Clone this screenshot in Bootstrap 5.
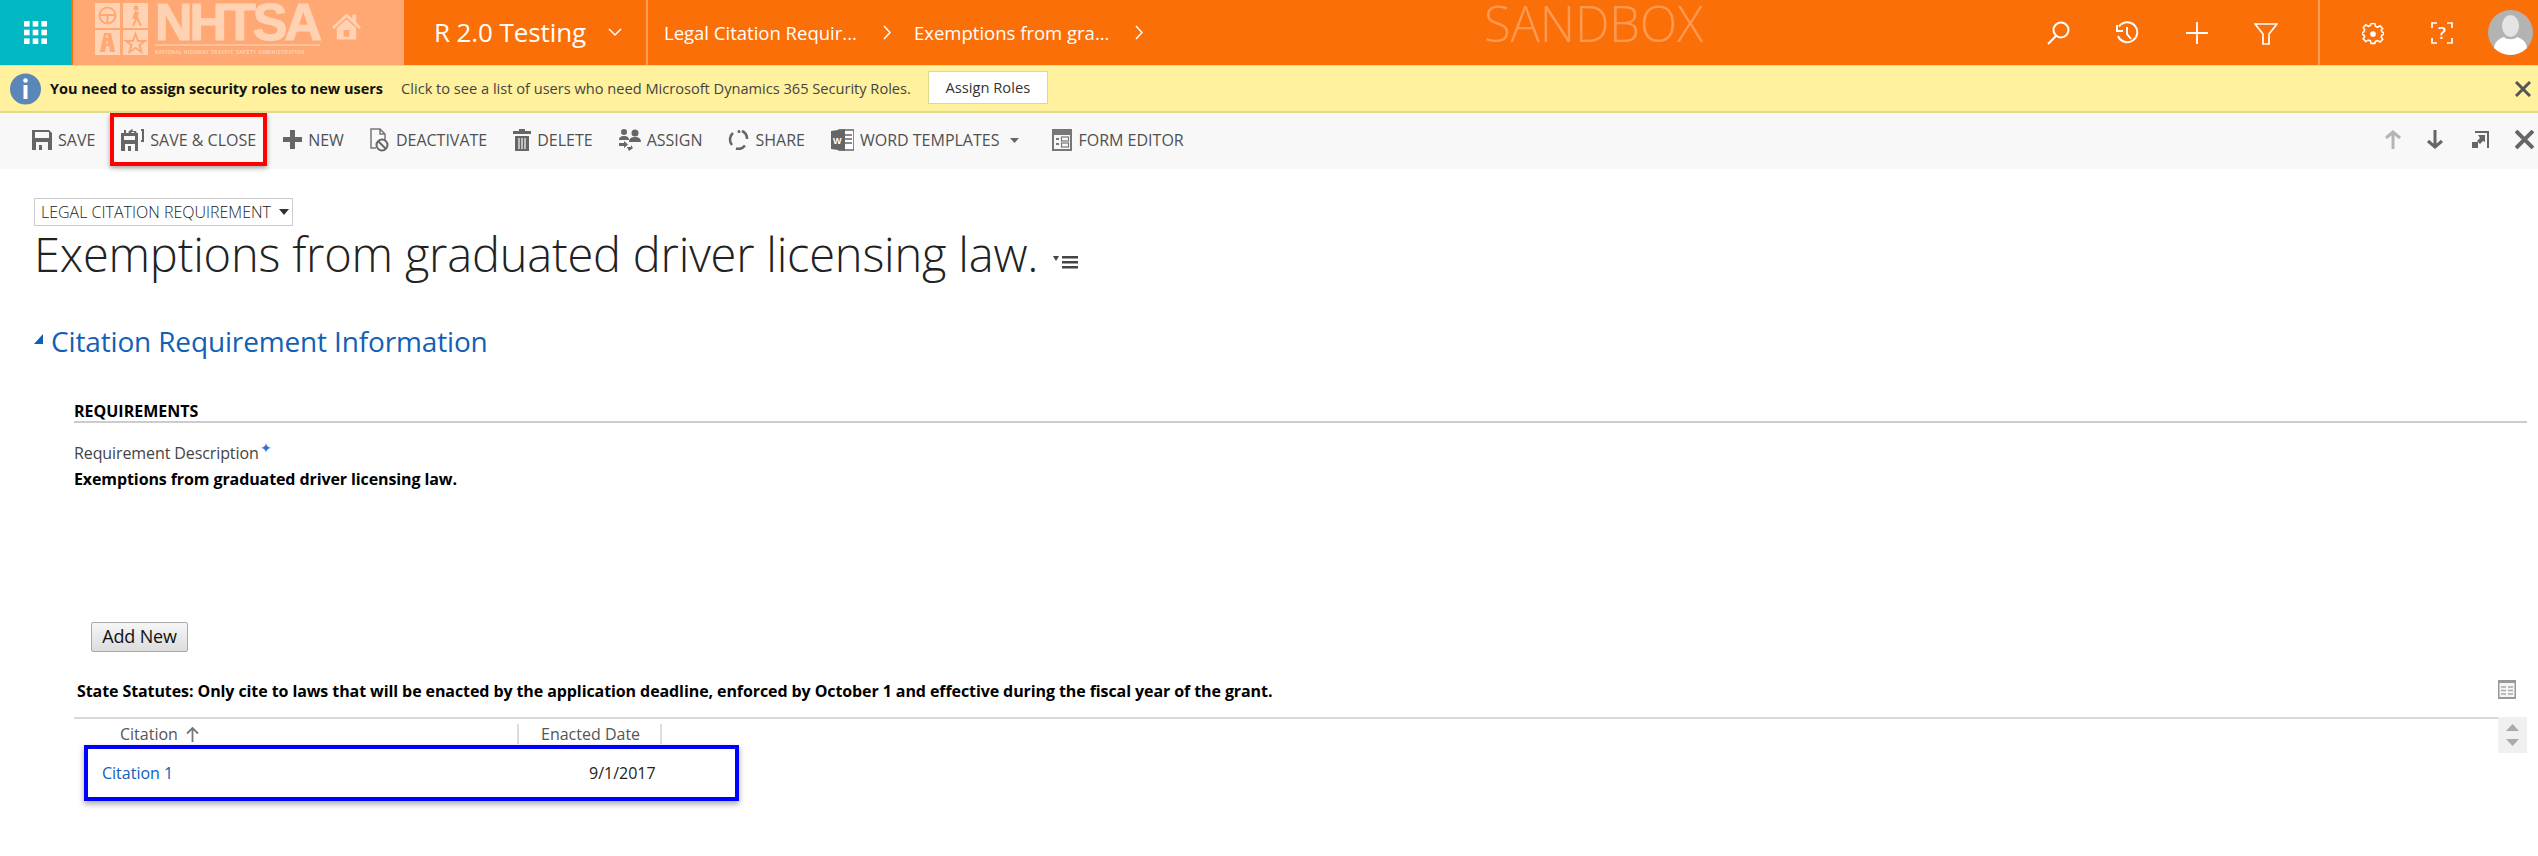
<!DOCTYPE html>
<html lang="en"><head><meta charset="utf-8"><title>Exemptions</title>
<link href="https://cdn.jsdelivr.net/npm/bootstrap@5.3.0/dist/css/bootstrap.min.css" rel="stylesheet">
<style>
html,body{height:856px;overflow:hidden}
body{font-family:"Open Sans","Noto Sans",sans-serif;background:#fff;color:#000}
.topbar{height:65px;background:#fb6f09;color:#fff}
.waffle{width:71px;background:#00b7c3}
.logo-zone{width:333px;background:#ffa873;border-left:2px solid #fb6f09;color:#ffd2b3;padding-left:22px}
.logo-word{font:700 52px/42px "Liberation Sans",sans-serif;letter-spacing:-3px;-webkit-text-stroke:1.2px #ffd2b3;margin-top:1px;height:45px;border-bottom:2px solid #ffc49f;width:165px}
.logo-sub{font:700 4.6px/6px "Liberation Sans",sans-serif;letter-spacing:.5px;white-space:nowrap;margin-top:4px}
.logo-tiles{margin:3px 7px 0 0}
.logo-house{margin:13px 0 0 12px}
.env-name{width:244px;padding-left:30px;font-size:26px;letter-spacing:-.1px;border-right:2px solid #ff9d55}
.crumb{font-size:18.5px;white-space:nowrap;padding-left:16px}
.crumb-a{width:219px}
.crumb-b{width:221px;margin-left:22px}
.sandbox{font-size:49px;font-weight:300;color:#fd9a52;letter-spacing:-.2px;line-height:46px;left:1484px;top:0}
.top-icon{width:69.5px}
.divider{width:2px;height:65px;background:#ff9d55;margin-left:13px}
.gear-cell{margin-left:42px;width:69px}
.help-cell{width:22px;height:22px;font-size:17px;font-weight:600;line-height:22px}
.avatar{width:45px;height:45px;border-radius:50%;background:#b3b3b3;overflow:hidden;margin:0 5px 0 35px}
.notice{height:48px;background:#fff19d;border-bottom:2px solid #dddb8e;border-top:1px solid #e8e08a;padding-left:10px;color:#333}
.notice b{font-weight:700;color:#111;font-size:14.5px;margin-left:9px;white-space:nowrap}
.notice-text{margin-left:18px;font-size:14.6px;white-space:nowrap;color:#444}
.assign-btn{width:120px;height:33px;background:#fff;border:1px solid #dddb8e;margin-left:17px;font-size:14.7px;color:#333;text-align:center;line-height:30px;margin-top:-2px}
.notice-x{margin-right:7px}
.cmdbar{height:56px;background:#f8f8f8;padding-left:19px;color:#505050}
.cmd{padding:0 13px;height:53px;font-size:16px;white-space:nowrap;gap:6px}
.cmd-red{border:4px solid #f00;padding:0 7px;margin:0 3px 0 2px;box-shadow:0 2px 5px rgba(0,0,0,.35)}
.cmd-tight{padding-right:0}
.cmd-caret{margin:25px 33px 0 11px}
.cmd-right{height:53px;margin-right:4px}
.ar-up{margin-right:26px}
.ar-down{margin-right:29px}
.ar-exp{margin-right:26px}
.form-zone{padding:29px 11px 0 34px}
.type-pick{width:259px;height:28px;border:1px solid #ccc;font-size:16px;font-weight:300;color:#222;padding-left:6px;line-height:26px;white-space:nowrap}
.page-title{font-size:47px;font-weight:300;line-height:80px;letter-spacing:-.2px;color:#222;margin:-12px 0 0;white-space:nowrap;height:87px}
.title-menu{margin:41px 0 0 15px}
.sect-title{font-size:28px;line-height:36px;color:#1160b7;letter-spacing:-.15px;margin:22px 0 0;font-weight:400}
.sect-tri{width:0;height:0;border-style:solid;border-width:0 0 10px 9px;border-color:transparent transparent #1160b7 transparent;margin-right:8px;margin-top:-4px}
.reqs{margin:42px 0 0 40px}
.reqs-head{font-size:16px;font-weight:700;line-height:20px;border-bottom:2px solid #ccc;color:#000}
.field-label{font-size:16px;letter-spacing:-.1px;color:#444;line-height:20px;margin-top:18px}
.field-star{color:#3b6fc4;font-size:14px;line-height:1;vertical-align:6px;margin-left:1px}
.field-val{font-size:16px;font-weight:700;letter-spacing:-.1px;line-height:20px;margin-top:6px;color:#000}
.add-new{width:97px;height:30px;margin:133px 0 0 91px;background:linear-gradient(#f6f6f6,#dcdcdc);border:1px solid #a9a9a9;border-radius:2px;font-size:18px;line-height:27px;color:#111;text-align:center;letter-spacing:-.2px}
.grid-cap{margin:29px 0 0 77px;font-size:16px;font-weight:700;letter-spacing:-.09px;line-height:20px;height:36px;white-space:nowrap;color:#000}
.grid-icon{margin:-1px 22px 0 0}
.grid-wrap{margin-left:74px}
.grid-rule{border-top:2px solid #d8d8d8;margin-right:40px;height:36px;padding-top:5px;color:#555;font-size:16px}
.col-cit{width:445px;padding-left:46px;height:20px;border-right:2px solid #ddd;line-height:24px}
.col-date{width:143px;padding-left:22px;height:20px;border-right:2px solid #ddd;line-height:24px;white-space:nowrap}
.scroll-box{width:29px;height:36px;background:#f0f0f0;right:11px;top:0}
.row-box{margin-left:10px;width:655px;height:56px;border:4px solid #00f;box-shadow:0 3px 6px rgba(0,0,0,.35);font-size:16px;color:#222;margin-top:-8px;position:relative}
.cit-link{color:#1160b7;margin-left:14px;width:487px;text-decoration:none}
</style></head><body>

<div class="topbar d-flex position-relative">
  <div class="waffle d-flex align-items-center justify-content-center">
    <svg width="23" height="23" viewBox="0 0 23 23" fill="#fff"><rect width="5.6" height="5.6"/><rect x="8.7" width="5.6" height="5.6"/><rect x="17.4" width="5.6" height="5.6"/><rect y="8.7" width="5.6" height="5.6"/><rect x="8.7" y="8.7" width="5.6" height="5.6"/><rect x="17.4" y="8.7" width="5.6" height="5.6"/><rect y="17.4" width="5.6" height="5.6"/><rect x="8.7" y="17.4" width="5.6" height="5.6"/><rect x="17.4" y="17.4" width="5.6" height="5.6"/></svg>
  </div>
  <div class="logo-zone d-flex">
    <svg width="53" height="52" viewBox="0 0 53 52" class="logo-tiles flex-shrink-0" fill="#ffd2b3">
      <rect width="25" height="25"/><rect x="28" width="25" height="25"/><rect y="27" width="25" height="25"/><rect x="28" y="27" width="25" height="25"/>
      <circle cx="12.5" cy="12.5" r="8" fill="none" stroke="#ffa873" stroke-width="2"/><path d="M5 12h15M12.500 13v7" stroke="#ffa873" stroke-width="2"/>
      <circle cx="41" cy="5" r="2.500" fill="#ffa873"/><path d="M40 8l-3 7 3 1-3 7h2l3-6 3 6h2l-4-9 1-5z" fill="#ffa873"/>
      <path d="M9 30h7l4 19h-5l-1-6h-3l-1 6H5z" fill="#ffa873"/><path d="M12 32v3M12 38v3" stroke="#ffd2b3" stroke-width="1.500"/>
      <path d="M40.500 31l2.500 7h7l-5.500 4 2 7-6-4-6 4 2-7-5.500-4h7z" fill="none" stroke="#ffa873" stroke-width="2"/>
    </svg>
    <div class="flex-shrink-0">
      <div class="logo-word">NHTSA</div>
      <div class="logo-sub">NATIONAL HIGHWAY TRAFFIC SAFETY ADMINISTRATION</div>
    </div>
    <svg width="29" height="27" viewBox="0 0 30 27" class="logo-house flex-shrink-0" fill="#ffd2b3"><path d="M15 0l6 5V1h4v8l5 5-2 2-13-12L2 16l-2-2z"/><path fill-rule="evenodd" d="M5 15L15 6l10 9v12H5zM12 17v7h6v-7z"/></svg>
  </div>
  <div class="env-name d-flex align-items-center justify-content-between flex-shrink-0 pe-3">
    <span>R 2.0 Testing</span>
    <svg width="14" height="9" viewBox="0 0 14 9" fill="none" stroke="#fff" stroke-width="1.500" class="me-2"><path d="M1 1l6 6 6-6"/></svg>
  </div>
  <div class="d-flex align-items-center crumb">
    <span class="crumb-a">Legal Citation Requir...</span>
    <svg width="9" height="15" viewBox="0 0 9 15" fill="none" stroke="#fff" stroke-width="1.500"><path d="M1 1l6 6.500-6 6.500"/></svg>
    <span class="crumb-b">Exemptions from gra...</span>
    <svg width="9" height="15" viewBox="0 0 9 15" fill="none" stroke="#fff" stroke-width="1.500"><path d="M1 1l6 6.500-6 6.500"/></svg>
  </div>
  <div class="sandbox position-absolute">SANDBOX</div>
  <div class="ms-auto d-flex align-items-center">
    <div class="top-icon text-center"><svg width="24" height="24" viewBox="0 0 24 24" fill="none" stroke="#fff" stroke-width="2"><circle cx="15" cy="9" r="7.500"/><path d="M10 15L2 23"/></svg></div>
    <div class="top-icon text-center"><svg width="24" height="24" viewBox="0 0 24 24" fill="none" stroke="#fff" stroke-width="2"><path d="M4 5.500A10 10 0 1 1 3 15"/><path d="M2 4v6h6"/><path d="M12 6v7l4 5"/></svg></div>
    <div class="top-icon text-center"><svg width="24" height="24" viewBox="0 0 24 24" fill="none" stroke="#fff" stroke-width="1.800"><path d="M12 1v22M1 12h22"/></svg></div>
    <div class="top-icon text-center me-1"><svg width="24" height="22" viewBox="0 0 24 22" fill="none" stroke="#fff" stroke-width="1.700"><path d="M1 1h22l-8 10v10H9V11z"/></svg></div>
    <div class="divider"></div>
    <div class="gear-cell"><svg width="22" height="22" viewBox="0 0 22 22" fill="none" stroke="#fff" stroke-width="1.700"><path d="M9 1h4l.6 3 2.200 1 2.700-1.500 2.700 2.800L19.700 8l.9 2 2.400 1v1l-2.400 1.200-.9 2 1.500 2.500-2.700 2.800-2.700-1.500-2.200.9L13 22H9l-.6-2.600-2.200-.9L3.500 20 .8 17.200 2.300 14.700l-.9-1.500L-1 12v-1l2.400-1 .9-2L.8 5.300 3.500 2.500 6.200 4l2.200-1z" transform="translate(.5 -.5) scale(.95)"/><circle cx="11" cy="11" r="2" fill="#fff"/></svg></div>
    <div class="help-cell d-flex align-items-center justify-content-center position-relative">?
      <svg class="position-absolute top-0 start-0" width="22" height="22" viewBox="0 0 22 22" fill="none" stroke="#fff" stroke-width="1.700"><path d="M1 6V1h5M16 1h5v5M21 16v5h-5M6 21H1v-5"/></svg>
    </div>
    <div class="avatar flex-shrink-0"><svg width="45" height="45" viewBox="0 0 45 45"><ellipse cx="22.500" cy="16" rx="8.500" ry="11" fill="#e4e4e4"/><path d="M6 45c-1-10 1-15 10-18 2 3 11 3 13 0 9 3 11 8 10 18z" fill="#fff"/></svg></div>
  </div>
</div>

<div class="notice d-flex align-items-center position-relative">
  <svg width="31" height="32" viewBox="0 0 31 32" class="flex-shrink-0"><circle cx="15.500" cy="16" r="15.500" fill="#5a87b8"/><circle cx="15.500" cy="7.500" r="2.300" fill="#fff"/><rect x="13.500" y="12" width="4" height="14" fill="#fff"/></svg>
  <b>You need to assign security roles to new users</b>
  <span class="notice-text">Click to see a list of users who need Microsoft Dynamics 365 Security Roles.</span>
  <div class="assign-btn">Assign Roles</div>
  <svg width="16" height="16" viewBox="0 0 16 16" class="ms-auto notice-x" stroke="#555" stroke-width="3"><path d="M1 1l14 14M15 1L1 15"/></svg>
</div>

<div class="cmdbar d-flex align-items-start">
  <div class="cmd d-flex align-items-center"><svg width="20" height="20" viewBox="0 0 20 20" fill="#666"><path fill-rule="evenodd" d="M0 0h17l3 3v17H0zM3 2v6h14V2zM4 12v8h3v-5h3v5h6v-8z"/></svg>SAVE</div>
  <div class="cmd cmd-red d-flex align-items-center"><svg width="23" height="22" viewBox="0 0 23 22" fill="#666"><path fill-rule="evenodd" d="M0 4h3V1h2v3h12v18H0zM3 7v4h11V7zM4 15v7h3v-5h3v5h4v-7z"/><path d="M7 3l4-3 1 1-1 1h4l1 3h-2l-1-2h-3l1 1-1 1zM20 0h3v13h-3v-2h1V2h-1z"/></svg>SAVE &amp; CLOSE</div>
  <div class="cmd d-flex align-items-center"><svg width="19" height="19" viewBox="0 0 19 19" fill="#666"><path d="M7 0h5v7h7v5h-7v7H7v-7H0V7h7z"/></svg>NEW</div>
  <div class="cmd d-flex align-items-center"><svg width="20" height="24" viewBox="0 0 20 24" fill="none" stroke="#777" stroke-width="1.500"><path d="M6 20H1V1h9l5 5v6M10 1v5h5"/><circle cx="12" cy="17" r="5.500" stroke="#666" stroke-width="2"/><path d="M8 13l8 8" stroke="#666" stroke-width="2"/></svg>DEACTIVATE</div>
  <div class="cmd d-flex align-items-center"><svg width="18" height="22" viewBox="0 0 18 22" fill="#666"><path d="M6 0h6v2h6v3H0V2h6zM2 7h14v15H2z"/><path d="M6 9v11M9 9v11M12 9v11" stroke="#f8f8f8" stroke-width="1.200"/></svg>DELETE</div>
  <div class="cmd d-flex align-items-center"><svg width="22" height="22" viewBox="0 0 22 22" fill="#666"><circle cx="5" cy="3" r="3"/><circle cx="16" cy="4" r="3.500"/><path d="M0 11c0-3 2-4 5-4s5 1 5 4zM10 13c0-4 3-5 6-5s6 1 6 5zM0 14h5v-2l4 3.500L5 19v-2H0zM8 18h4v-2l2 3-4 3z"/></svg>ASSIGN</div>
  <div class="cmd d-flex align-items-center"><svg width="21" height="21" viewBox="0 0 21 21" fill="none" stroke="#666" stroke-width="2.500"><path d="M5 4A8.500 8.500 0 0 0 4 16M8 19.500a8.500 8.500 0 0 0 9-3M14 2a8.500 8.500 0 0 1 5 8"/><circle cx="11" cy="2.500" r="1.500" fill="#666" stroke="none"/></svg>SHARE</div>
  <div class="cmd cmd-tight d-flex align-items-center"><svg width="23" height="22" viewBox="0 0 23 22"><rect x="8" y="1" width="15" height="20" fill="#fff" stroke="#666" stroke-width="1.500"/><path d="M14 6h7M14 10h7M14 14h7" stroke="#666" stroke-width="1.500"/><path d="M0 2l14-2v22L0 20z" fill="#666"/><text x="2" y="15" font-size="9" font-weight="700" fill="#fff" font-family="Liberation Sans,sans-serif">W</text></svg>WORD TEMPLATES</div>
  <svg width="9" height="5" viewBox="0 0 9 5" fill="#666" class="cmd-caret"><path d="M0 0h9L4.500 5z"/></svg>
  <div class="cmd ps-0 d-flex align-items-center"><svg width="20" height="22" viewBox="0 0 20 22"><rect width="20" height="22" fill="#777"/><rect x="2" y="6" width="16" height="14" fill="#f8f8f8"/><path d="M4 10h3M4 15h3" stroke="#777" stroke-width="2"/><rect x="9.500" y="8" width="7" height="4" fill="none" stroke="#777" stroke-width="1.200"/><rect x="9.500" y="14" width="7" height="4" fill="none" stroke="#777" stroke-width="1.200"/></svg>FORM EDITOR</div>
  <div class="ms-auto d-flex align-items-center cmd-right">
    <svg width="16" height="19" viewBox="0 0 16 19" fill="none" stroke="#b5b5b5" stroke-width="3" class="ar-up"><path d="M8 19V2M1 8l7-6 7 6"/></svg>
    <svg width="16" height="19" viewBox="0 0 16 19" fill="none" stroke="#666" stroke-width="3" class="ar-down"><path d="M8 0v17M1 11l7 6 7-6"/></svg>
    <svg width="17" height="17" viewBox="0 0 17 17" fill="#666" class="ar-exp"><path d="M3 0h14v17h-2V2H3z"/><rect y="11" width="6" height="6"/><path d="M6 4h7v7l-2-1-3 3-3-3 3-3z"/></svg>
    <svg width="19" height="19" viewBox="0 0 19 19" stroke="#666" stroke-width="4"><path d="M1 1l17 17M18 1L1 18"/></svg>
  </div>
</div>

<div class="form-zone">
  <div class="type-pick d-flex align-items-center">LEGAL CITATION REQUIREMENT
    <svg width="10" height="6" viewBox="0 0 10 6" fill="#333" class="ms-2"><path d="M0 0h10L5 6z"/></svg></div>
  <h1 class="page-title d-flex align-items-start"><span>Exemptions from graduated driver licensing law.</span>
    <svg width="25" height="15" viewBox="0 0 25 15" fill="#444" class="title-menu"><path d="M0 1h6L3 6zM9 1h16v2.500H9zM9 6h16v2.500H9zM9 11h16v2.500H9z"/></svg></h1>
  <h2 class="sect-title d-flex align-items-center"><span class="sect-tri"></span>Citation Requirement Information</h2>
  <div class="reqs">
    <div class="reqs-head">REQUIREMENTS</div>
    <div class="field-label">Requirement Description<span class="field-star">✦</span></div>
    <div class="field-val">Exemptions from graduated driver licensing law.</div>
  </div>
</div>
<div class="add-new">Add New</div>
<div class="grid-cap d-flex justify-content-between">State Statutes: Only cite to laws that will be enacted by the application deadline, enforced by October 1 and effective during the fiscal year of the grant.
  <svg width="18" height="19" viewBox="0 0 18 19" class="grid-icon"><rect width="18" height="19" fill="#999"/><rect x="1.500" y="3" width="15" height="14" fill="#f4f4f4"/><path d="M3 7h5M10 7h5M3 10.500h5M10 10.500h5M3 14h5M10 14h5" stroke="#aaa" stroke-width="1.500"/></svg></div>
<div class="grid-wrap position-relative">
  <div class="grid-rule d-flex">
    <div class="col-cit d-flex align-items-center">Citation <svg width="13" height="15" viewBox="0 0 13 15" fill="none" stroke="#777" stroke-width="1.800" class="ms-2"><path d="M6.500 15V1M1 6.500l5.500-5.500 5.500 5.500"/></svg></div>
    <div class="col-date d-flex align-items-center">Enacted Date</div>
  </div>
  <div class="scroll-box position-absolute d-flex flex-column align-items-center justify-content-center gap-2">
    <svg width="13" height="7" viewBox="0 0 13 7" fill="#aaa"><path d="M6.500 0L13 7H0z"/></svg>
    <svg width="13" height="7" viewBox="0 0 13 7" fill="#aaa"><path d="M0 0h13L6.500 7z"/></svg>
  </div>
  <div class="row-box d-flex align-items-center"><a href="#" class="cit-link">Citation 1</a><span>9/1/2017</span></div>
</div>
<script src="https://cdn.jsdelivr.net/npm/bootstrap@5.3.0/dist/js/bootstrap.bundle.min.js"></script>
</body></html>
